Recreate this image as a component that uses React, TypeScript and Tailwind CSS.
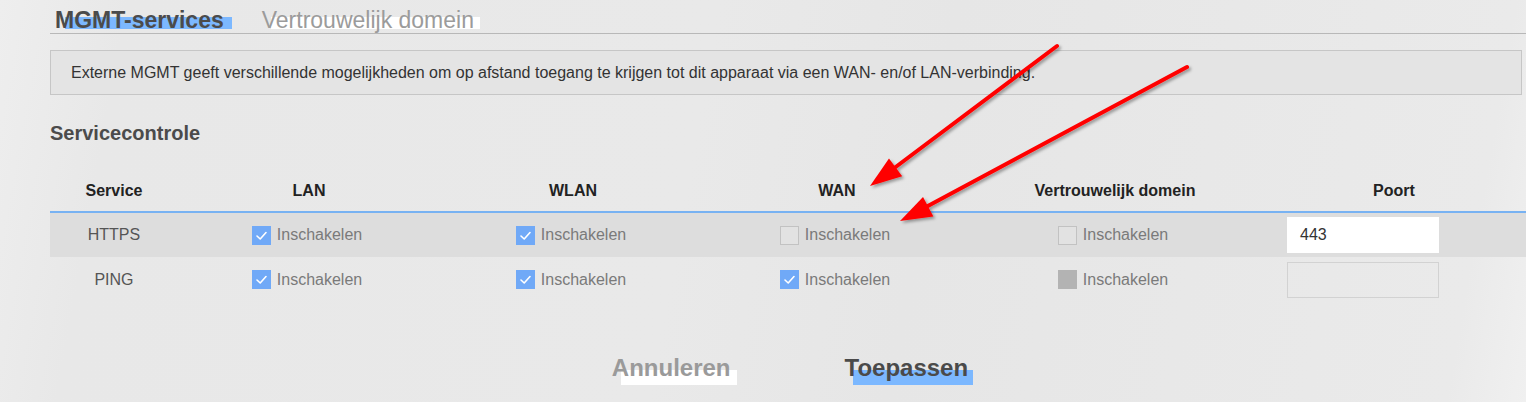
import { ReactNode } from "react";

type BoxState = "on" | "off" | "disabled";

const CheckBox = ({ state }: { state: BoxState }) => {
  if (state === "on") {
    return (
      <span className="flex h-[19px] w-[19px] items-center justify-center bg-[#70a9f7]">
        <svg width="13" height="13" viewBox="0 0 13 13" fill="none">
          <path d="M2 7 L5.2 10 L11 3.5" stroke="#ffffff" strokeWidth="1.6" strokeLinecap="round" strokeLinejoin="round" />
        </svg>
      </span>
    );
  }
  if (state === "disabled") {
    return <span className="block h-[19px] w-[19px] bg-[#b3b3b3]" />;
  }
  return <span className="block h-[19px] w-[19px] border border-[#c2c2c2] bg-[#e2e2e2]" />;
};

const Toggle = ({ state }: { state: BoxState }) => (
  <div className="flex items-center justify-center gap-[6px] pr-[4px]">
    <CheckBox state={state} />
    <span className="text-[16px] text-[#7a7a7a]">Inschakelen</span>
  </div>
);

const Tab = ({ label, active }: { label: string; active?: boolean }) => (
  <div className="relative">
    <span
      className={
        active
          ? "absolute left-[10px] top-[10px] h-[12px] w-[167px] bg-[#7cb8ff]"
          : "absolute left-[9px] top-[10px] h-[12px] w-[209px] bg-white"
      }
    />
    <span
      className={
        active
          ? "relative text-[23px] font-bold leading-[26px] text-[#4b4b4b]"
          : "relative text-[23px] leading-[26px] text-[#9b9b9b]"
      }
    >
      {label}
    </span>
  </div>
);

const Button = ({ label, primary }: { label: string; primary?: boolean }) => (
  <div className="relative">
    <span
      className={
        primary
          ? "absolute left-[8px] top-[17px] h-[15px] w-[120px] bg-[#7cb8ff]"
          : "absolute left-[9px] top-[17px] h-[15px] w-[116px] bg-white"
      }
    />
    <span
      className={
        primary
          ? "relative text-[24px] font-bold leading-[30px] text-[#4a4a4a]"
          : "relative text-[24px] font-bold leading-[30px] text-[#9a9a9a]"
      }
    >
      {label}
    </span>
  </div>
);

const Row = ({ children, shaded }: { children: ReactNode; shaded?: boolean }) => (
  <div
    className={
      shaded
        ? "grid h-[44px] grid-cols-[128px_262px_266px_262px_294px_1fr] items-center bg-[#dddddd]"
        : "grid h-[45px] grid-cols-[128px_262px_266px_262px_294px_1fr] items-center"
    }
  >
    {children}
  </div>
);

const Arrows = () => (
  <svg className="pointer-events-none absolute left-0 top-0" width="1526" height="402">
    <defs>
      <filter id="shadow" x="-20%" y="-20%" width="140%" height="140%">
        <feDropShadow dx="2" dy="2" stdDeviation="1.5" floodColor="#000000" floodOpacity="0.35" />
      </filter>
    </defs>
    <g filter="url(#shadow)" fill="#ff0000" stroke="#ff0000">
      <line x1="1057" y1="46" x2="893" y2="169" strokeWidth="4" strokeLinecap="round" />
      <polygon points="870,186 902.2,176.2 889,158.6" stroke="none" />
      <line x1="1187" y1="67" x2="926" y2="207" strokeWidth="4" strokeLinecap="round" />
      <polygon points="900,221 933.4,216.5 923,197.1" stroke="none" />
    </g>
  </svg>
);

export default function App() {
  return (
    <div
      className="relative h-[402px] w-full overflow-hidden bg-[linear-gradient(100deg,#eeeeee_0%,#e8e8e8_8%,#e9e9e9_45%,#e6e6e6_60%,#eaeaea_95%,#f0f0f0_100%)] pl-[50px]"
      style={{ fontFamily: '"Liberation Sans", Arial, sans-serif' }}
    >
      <div className="flex h-[34px] gap-[38px] border-b border-[#b8b8b8] pl-[5px] pt-[7px]">
        <Tab label="MGMT-services" active />
        <Tab label="Vertrouwelijk domein" />
      </div>

      <div className="mr-[4px] mt-[16px] flex h-[45px] items-center border border-[#c6c6c6] bg-[#e4e4e4] px-[20px] text-[16px] text-[#333333]">
        Externe MGMT geeft verschillende mogelijkheden om op afstand toegang te krijgen tot dit apparaat via een WAN- en/of LAN-verbinding.
      </div>

      <div className="mt-[26px] text-[20px] font-bold leading-[24px] text-[#4b4b4b]">Servicecontrole</div>

      <div className="mt-[25px]">
        <div className="grid h-[43px] grid-cols-[128px_262px_266px_262px_294px_1fr] items-center border-b-2 border-[#78b2f2] text-center text-[16px] font-bold text-[#222222]">
          <div>Service</div>
          <div>LAN</div>
          <div>WLAN</div>
          <div>WAN</div>
          <div>Vertrouwelijk domein</div>
          <div>Poort</div>
        </div>

        <Row shaded>
          <div className="text-center text-[16px] text-[#555555]">HTTPS</div>
          <Toggle state="on" />
          <Toggle state="on" />
          <Toggle state="off" />
          <Toggle state="off" />
          <div className="pl-[25px]">
            <div className="flex h-[36px] w-[152px] items-center bg-white px-[13px] text-[16px] text-[#333333]">443</div>
          </div>
        </Row>

        <Row>
          <div className="text-center text-[16px] text-[#555555]">PING</div>
          <Toggle state="on" />
          <Toggle state="on" />
          <Toggle state="on" />
          <Toggle state="disabled" />
          <div className="pl-[25px]">
            <div className="h-[36px] w-[152px] border border-[#d2d2d2]" />
          </div>
        </Row>
      </div>

      <div className="mt-[51px] flex justify-center gap-[114px] pl-[4px]">
        <Button label="Annuleren" />
        <Button label="Toepassen" primary />
      </div>

      <Arrows />
    </div>
  );
}
